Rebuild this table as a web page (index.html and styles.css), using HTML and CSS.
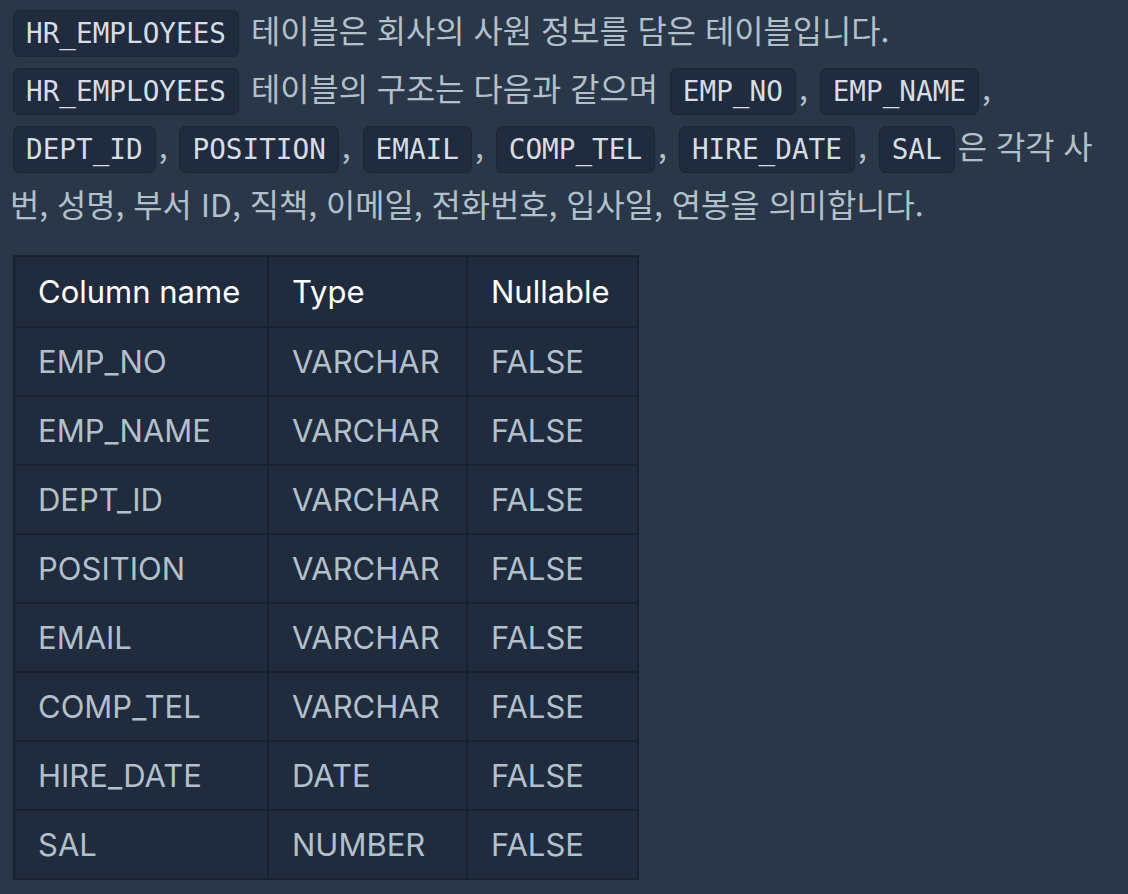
FILE: index.html
```html
<!DOCTYPE html>
<html lang="ko">
<head>
<meta charset="utf-8">
<title>HR_EMPLOYEES</title>
<link rel="stylesheet" href="styles.css">
</head>
<body>
<div class="content">
  <p class="desc"><code>HR_EMPLOYEES</code> 테이블은 회사의 사원 정보를 담은 테이블입니다.</p>
  <p class="desc"><code>HR_EMPLOYEES</code> 테이블의 구조는 다음과 같으며 <code>EMP_NO</code>, <code>EMP_NAME</code>, <code>DEPT_ID</code>, <code>POSITION</code>, <code>EMAIL</code>, <code>COMP_TEL</code>, <code>HIRE_DATE</code>, <code>SAL</code>은 각각 사번, 성명, 부서 ID, 직책, 이메일, 전화번호, 입사일, 연봉을 의미합니다.</p>
  <table class="schema">
    <thead>
      <tr><th>Column name</th><th>Type</th><th>Nullable</th></tr>
    </thead>
    <tbody>
      <tr><td>EMP_NO</td><td>VARCHAR</td><td>FALSE</td></tr>
      <tr><td>EMP_NAME</td><td>VARCHAR</td><td>FALSE</td></tr>
      <tr><td>DEPT_ID</td><td>VARCHAR</td><td>FALSE</td></tr>
      <tr><td>POSITION</td><td>VARCHAR</td><td>FALSE</td></tr>
      <tr><td>EMAIL</td><td>VARCHAR</td><td>FALSE</td></tr>
      <tr><td>COMP_TEL</td><td>VARCHAR</td><td>FALSE</td></tr>
      <tr><td>HIRE_DATE</td><td>DATE</td><td>FALSE</td></tr>
      <tr><td>SAL</td><td>NUMBER</td><td>FALSE</td></tr>
    </tbody>
  </table>
</div>
</body>
</html>
```

FILE: styles.css
```css
html, body {
  margin: 0;
  padding: 0;
  background: #2a3748;
}

.content {
  padding: 0 20px 0 10px;
  font-family: "Noto Sans CJK KR", "Noto Sans", sans-serif;
  font-size: 31.8px;
  color: #b2c0cc;
}

.desc {
  margin: 0;
  line-height: 58px;
}

code {
  font-family: "DejaVu Sans Mono", monospace;
  font-size: 27.7px;
  line-height: 1;
  color: #d6dde4;
  background: #202b3d;
  border: 1px solid #1b2433;
  border-radius: 7px;
  padding: 6px 12px;
  margin: 0 3px;
}

.schema {
  margin: 23px 0 0 3px;
  border-collapse: collapse;
  background: #202b3d;
  font-family: Inter, "Noto Sans", sans-serif;
  font-size: 31px;
}

.schema th,
.schema td {
  border: 2px solid #172130;
  height: 69px;
  padding: 0 23px;
  text-align: left;
  box-sizing: border-box;
}

.schema th {
  height: 71px;
  font-weight: 400;
  color: #ffffff;
}

.schema td {
  color: #b2c0cc;
}

.schema th:nth-child(1) { width: 254px; }
.schema th:nth-child(2) { width: 199px; }
.schema th:nth-child(3) { width: 171px; }
```
